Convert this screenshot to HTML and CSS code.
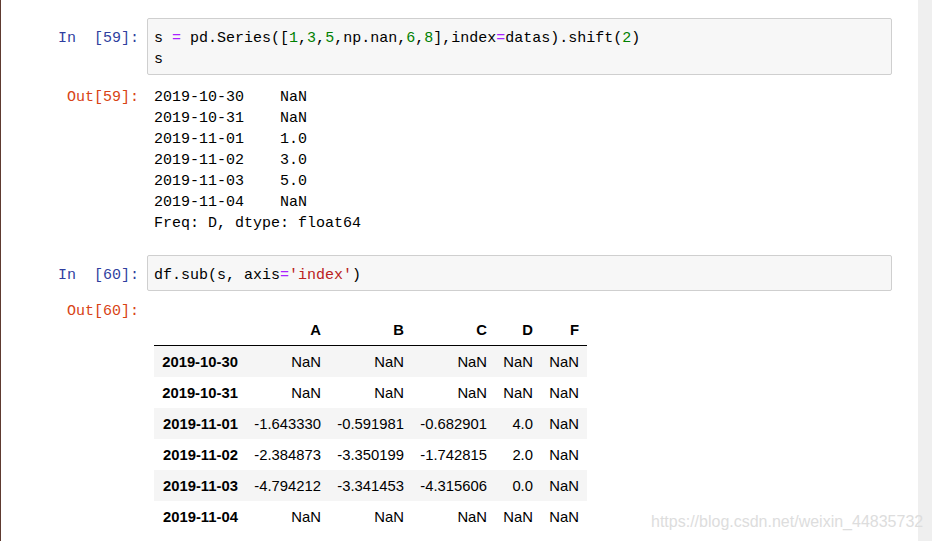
FILE: index.html
```html
<!DOCTYPE html>
<html>
<head>
<meta charset="utf-8">
<link rel="stylesheet" href="styles.css">
</head>
<body>
<div class="page">
  <main class="notebook">
    <section class="cell cell-first">
      <div class="row">
        <div class="prompt in-prompt">In&nbsp;&nbsp;[59]:</div>
        <div class="input-box">
          <div class="code-line">s <span class="op">=</span> pd.Series([<span class="num">1</span>,<span class="num">3</span>,<span class="num">5</span>,np.nan,<span class="num">6</span>,<span class="num">8</span>],index<span class="op">=</span>datas).shift(<span class="num">2</span>)</div>
          <div class="code-line">s</div>
        </div>
      </div>
      <div class="row output-row">
        <div class="prompt out-prompt">Out[59]:</div>
        <div class="output-text">
          <div class="out-line">2019-10-30    NaN</div>
          <div class="out-line">2019-10-31    NaN</div>
          <div class="out-line">2019-11-01    1.0</div>
          <div class="out-line">2019-11-02    3.0</div>
          <div class="out-line">2019-11-03    5.0</div>
          <div class="out-line">2019-11-04    NaN</div>
          <div class="out-line">Freq: D, dtype: float64</div>
        </div>
      </div>
    </section>

    <section class="cell">
      <div class="row">
        <div class="prompt in-prompt">In&nbsp;&nbsp;[60]:</div>
        <div class="input-box">
          <div class="code-line">df.sub(s, axis<span class="op">=</span><span class="str">'index'</span>)</div>
        </div>
      </div>
      <div class="row output-row output-row-html">
        <div class="prompt out-prompt">Out[60]:</div>
        <div class="output-html">
          <table class="dataframe">
            <thead>
              <tr><th></th><th>A</th><th>B</th><th>C</th><th>D</th><th>F</th></tr>
            </thead>
            <tbody>
              <tr><th>2019-10-30</th><td>NaN</td><td>NaN</td><td>NaN</td><td>NaN</td><td>NaN</td></tr>
              <tr><th>2019-10-31</th><td>NaN</td><td>NaN</td><td>NaN</td><td>NaN</td><td>NaN</td></tr>
              <tr><th>2019-11-01</th><td>-1.643330</td><td>-0.591981</td><td>-0.682901</td><td>4.0</td><td>NaN</td></tr>
              <tr><th>2019-11-02</th><td>-2.384873</td><td>-3.350199</td><td>-1.742815</td><td>2.0</td><td>NaN</td></tr>
              <tr><th>2019-11-03</th><td>-4.794212</td><td>-3.341453</td><td>-4.315606</td><td>0.0</td><td>NaN</td></tr>
              <tr><th>2019-11-04</th><td>NaN</td><td>NaN</td><td>NaN</td><td>NaN</td><td>NaN</td></tr>
            </tbody>
          </table>
        </div>
      </div>
    </section>
  </main>
  <aside class="side-strip"></aside>
  <div class="watermark">https://blog.csdn.net/weixin_44835732</div>
</div>
</body>
</html>
```

FILE: styles.css
```css
html, body {
  margin: 0;
  padding: 0;
  background: #ffffff;
}

.page {
  position: relative;
  display: flex;
  width: 932px;
  height: 541px;
  overflow: hidden;
}

.notebook {
  flex: 1;
  border-left: 1px solid #5e3a30;
  padding-top: 18px;
  padding-right: 26px;
  box-sizing: border-box;
}

.side-strip {
  width: 14px;
  background: #efefef;
}

.cell {
  margin-top: 21px;
}

.cell-first {
  margin-top: 0;
}

.row {
  display: flex;
  align-items: flex-start;
}

.prompt {
  width: 146px;
  flex: none;
  box-sizing: border-box;
  padding-right: 8px;
  text-align: right;
  font-family: "Liberation Mono", monospace;
  font-size: 15px;
  line-height: 21px;
  white-space: nowrap;
}

.in-prompt {
  color: #303f9f;
  padding-top: 10px;
}

.out-prompt {
  color: #d84315;
}

.input-box {
  flex: 1;
  background: #f7f7f7;
  border: 1px solid #cfcfcf;
  border-radius: 2px;
  padding: 9px 6px 4px 6px;
}

.code-line, .out-line {
  font-family: "Liberation Mono", monospace;
  font-size: 15px;
  line-height: 21px;
  color: #000000;
  white-space: pre;
}

.op {
  color: #aa22ff;
}

.num {
  color: #008000;
}

.str {
  color: #ba2121;
}

.output-row {
  margin-top: 12px;
}

.output-row-html {
  margin-top: 10px;
}

.output-text {
  padding-left: 7px;
}

.output-html {
  padding-left: 7px;
}

.dataframe {
  margin-top: 14px;
  border-collapse: collapse;
  border: none;
  font-family: "Liberation Sans", Arial, sans-serif;
  font-size: 14.8px;
  color: #000000;
}

.dataframe th,
.dataframe td {
  padding: 0 8.2px;
  line-height: 31px;
  text-align: right;
  vertical-align: middle;
  white-space: nowrap;
}

.dataframe th {
  font-weight: bold;
}

.dataframe td {
  font-weight: normal;
}

.dataframe thead th {
  line-height: 30px;
  border-bottom: 1px solid #000000;
}

.dataframe tbody td,
.dataframe tbody th {
  padding-top: 1px;
  line-height: 30px;
}

.dataframe tbody tr:nth-child(odd) {
  background: #f5f5f5;
}

.watermark {
  position: absolute;
  left: 651px;
  top: 512px;
  font-family: "Liberation Sans", Arial, sans-serif;
  font-size: 16px;
  line-height: 20px;
  color: #dddddd;
  white-space: nowrap;
}
```
